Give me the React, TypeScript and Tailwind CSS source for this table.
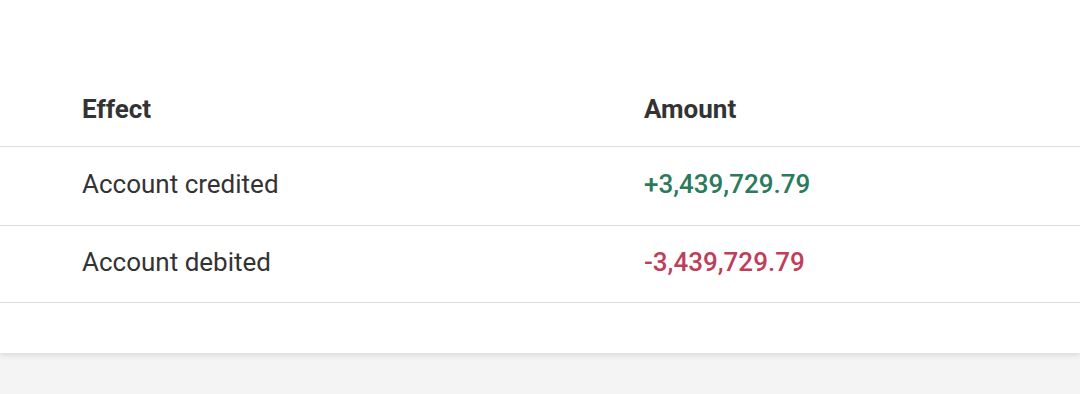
export default function App() {
  const rows = [
    { effect: "Account credited", amount: "+3,439,729.79", color: "text-[#2b7a5c]" },
    { effect: "Account debited", amount: "-3,439,729.79", color: "text-[#bd3f5c]" },
  ];
  return (
    <div className="w-[1080px] h-[394px] bg-[#f4f4f4] overflow-hidden" style={{ fontFamily: "Roboto, 'Liberation Sans', sans-serif" }}>
      <div className="bg-white h-[353px] shadow-[0_2px_6px_rgba(0,0,0,0.12)]">
        <div className="h-[72px]" />
        <div className="flex h-[75px] items-center border-b border-[#dedede] pl-[82px] text-[26px] font-bold text-[#333333]">
          <div className="w-[562px]">Effect</div>
          <div>Amount</div>
        </div>
        {rows.map((r, i) => (
          <div key={r.effect} className={`flex ${i === 0 ? "h-[79px]" : "h-[77px]"} items-center border-b border-[#dedede] pl-[82px] pb-[4px] text-[26px] text-[#333333]`}>
            <div className="w-[562px]">{r.effect}</div>
            <div className={`font-medium ${r.color}`}>{r.amount}</div>
          </div>
        ))}
      </div>
    </div>
  );
}
